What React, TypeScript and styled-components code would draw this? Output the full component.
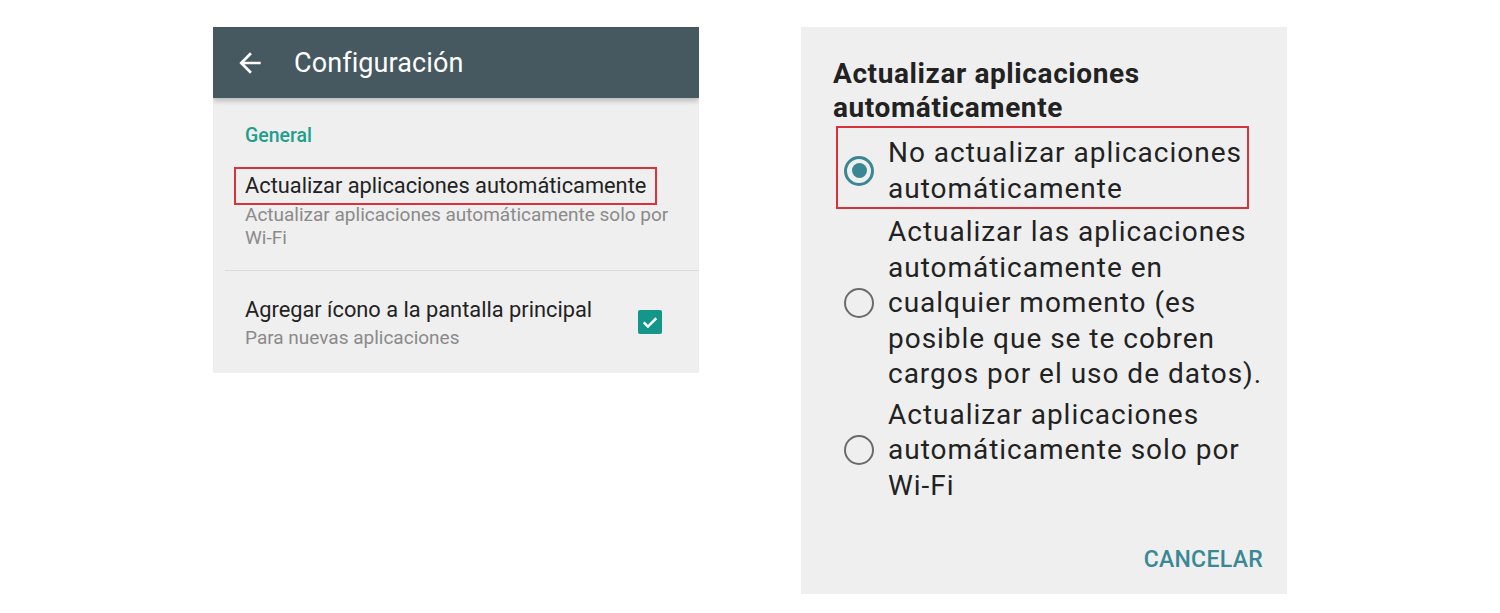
import React from "react"
import styled, { createGlobalStyle } from "styled-components"

const GlobalStyle = createGlobalStyle`
  html, body {
    margin: 0;
    padding: 0;
    background: #ffffff;
  }
  body {
    font-family: Roboto, "Noto Sans", sans-serif;
  }
`

const Page = styled.div`
  display: flex;
  flex-direction: row;
  justify-content: center;
  align-items: flex-start;
  gap: 102px;
  padding-top: 27px;
  width: 1500px;
  height: 613px;
  box-sizing: border-box;
`

const Panel = styled.div<{ $height: number }>`
  width: 486px;
  height: ${(p) => p.$height}px;
  background: #efefef;
  display: flex;
  flex-direction: column;
  box-sizing: border-box;
  overflow: hidden;
`

const Toolbar = styled.div`
  height: 71px;
  flex-shrink: 0;
  background: #465860;
  display: flex;
  align-items: center;
  padding-left: 21px;
  gap: 28px;
  color: #ffffff;
  box-shadow: 0 3px 5px rgba(0, 0, 0, 0.22);
  position: relative;
  z-index: 1;
`

const ToolbarTitle = styled.span`
  font-size: 27px;
  font-weight: 400;
  letter-spacing: 0.1px;
`

const SettingsBody = styled.div`
  display: flex;
  flex-direction: column;
  padding: 27px 0 0 12px;
`

const SectionLabel = styled.div`
  color: #1f9e8c;
  font-size: 19.5px;
  line-height: 22px;
  font-weight: 500;
  padding-left: 20px;
  margin-bottom: 20px;
`

const SettingRow = styled.div<{ $divider?: boolean }>`
  display: flex;
  align-items: center;
  padding: 0 36px 0 20px;
  border-bottom: ${(p) => (p.$divider ? "1px solid #dcdcdc" : "none")};
  padding-bottom: ${(p) => (p.$divider ? "21px" : "0")};
  margin-bottom: ${(p) => (p.$divider ? "26px" : "0")};
`

const SettingText = styled.div`
  flex: 1;
  display: flex;
  flex-direction: column;
`

const SettingTitle = styled.div<{ $boxed?: boolean }>`
  font-size: 21.8px;
  color: #222222;
  line-height: 26px;
  white-space: nowrap;
  align-self: flex-start;
  margin-left: ${(p) => (p.$boxed ? "-11px" : "0")};
  padding: ${(p) => (p.$boxed ? "4px 9px 4px 9px" : "0")};
  border: ${(p) => (p.$boxed ? "2px solid #d8323c" : "none")};
  margin-bottom: ${(p) => (p.$boxed ? "-2px" : "3px")};
`

const SettingSub = styled.div`
  font-size: 19px;
  color: #8a8a8a;
  line-height: 23px;
  white-space: nowrap;
`

const Checkbox = styled.div`
  width: 24px;
  height: 24px;
  border-radius: 2px;
  background: #14968a;
  display: flex;
  align-items: center;
  justify-content: center;
  margin-top: -2px;
  margin-right: 1px;
`

const DialogBody = styled.div`
  display: flex;
  flex-direction: column;
  padding: 30px 24px 0 32px;
  flex: 1;
`

const DialogTitle = styled.div`
  font-size: 28px;
  font-weight: 700;
  color: #222222;
  line-height: 34px;
  letter-spacing: 0.6px;
  margin-bottom: 1px;
`

const OptionList = styled.div`
  display: flex;
  flex-direction: column;
  gap: 5px;
`

const Option = styled.div<{ $boxed?: boolean }>`
  display: flex;
  align-items: center;
  gap: 14px;
  margin-left: ${(p) => (p.$boxed ? "3px" : "0")};
  padding: ${(p) => (p.$boxed ? "7px 5px 1px 6px" : "0 0 0 11px")};
  border: ${(p) => (p.$boxed ? "2px solid #d8323c" : "none")};
  align-self: flex-start;
`

const Radio = styled.div<{ $checked?: boolean }>`
  width: 30px;
  height: 30px;
  flex-shrink: 0;
  box-sizing: border-box;
  border-radius: 50%;
  border: ${(p) => (p.$checked ? "3px solid #3b8693" : "2.5px solid #6a6a6a")};
  display: flex;
  align-items: center;
  justify-content: center;
`

const RadioDot = styled.div`
  width: 15px;
  height: 15px;
  border-radius: 50%;
  background: #3b8693;
`

const OptionText = styled.div`
  font-size: 28px;
  color: #222222;
  line-height: 35.5px;
  letter-spacing: 0.98px;
  white-space: nowrap;
`

const Actions = styled.div`
  margin-top: auto;
  display: flex;
  justify-content: flex-end;
  padding-bottom: 21px;
`

const TextButton = styled.span`
  font-size: 23px;
  font-weight: 500;
  color: #3a8896;
  letter-spacing: 0.3px;
`

const BackArrow = () => (
  <svg width="32" height="32" viewBox="0 0 24 24" fill="#ffffff">
    <path d="M20 11H7.83l5.59-5.59L12 4l-8 8 8 8 1.41-1.41L7.83 13H20v-2z" />
  </svg>
)

const CheckMark = () => (
  <svg width="20" height="20" viewBox="0 0 24 24" fill="none" stroke="#ffffff" strokeWidth="3">
    <path d="M4.5 12.5l5 5 10-10" />
  </svg>
)

const options = [
  { checked: true, lines: ["No actualizar aplicaciones", "automáticamente"] },
  {
    checked: false,
    lines: [
      "Actualizar las aplicaciones",
      "automáticamente en",
      "cualquier momento (es",
      "posible que se te cobren",
      "cargos por el uso de datos).",
    ],
  },
  { checked: false, lines: ["Actualizar aplicaciones", "automáticamente solo por", "Wi-Fi"] },
]

const App = () => {
  return (
    <>
      <GlobalStyle />
      <Page>
        <Panel $height={346}>
          <Toolbar>
            <BackArrow />
            <ToolbarTitle>Configuración</ToolbarTitle>
          </Toolbar>
          <SettingsBody>
            <SectionLabel>General</SectionLabel>
            <SettingRow $divider>
              <SettingText>
                <SettingTitle $boxed>Actualizar aplicaciones automáticamente</SettingTitle>
                <SettingSub>
                  Actualizar aplicaciones automáticamente solo por
                  <br />
                  Wi-Fi
                </SettingSub>
              </SettingText>
            </SettingRow>
            <SettingRow>
              <SettingText>
                <SettingTitle>Agregar ícono a la pantalla principal</SettingTitle>
                <SettingSub>Para nuevas aplicaciones</SettingSub>
              </SettingText>
              <Checkbox>
                <CheckMark />
              </Checkbox>
            </SettingRow>
          </SettingsBody>
        </Panel>
        <Panel $height={567}>
          <DialogBody>
            <DialogTitle>
              Actualizar aplicaciones
              <br />
              automáticamente
            </DialogTitle>
            <OptionList>
              {options.map((o, i) => (
                <Option key={i} $boxed={o.checked}>
                  <Radio $checked={o.checked}>{o.checked && <RadioDot />}</Radio>
                  <OptionText>
                    {o.lines.map((l, j) => (
                      <React.Fragment key={j}>
                        {l}
                        {j < o.lines.length - 1 && <br />}
                      </React.Fragment>
                    ))}
                  </OptionText>
                </Option>
              ))}
            </OptionList>
            <Actions>
              <TextButton>CANCELAR</TextButton>
            </Actions>
          </DialogBody>
        </Panel>
      </Page>
    </>
  )
}

export default App
